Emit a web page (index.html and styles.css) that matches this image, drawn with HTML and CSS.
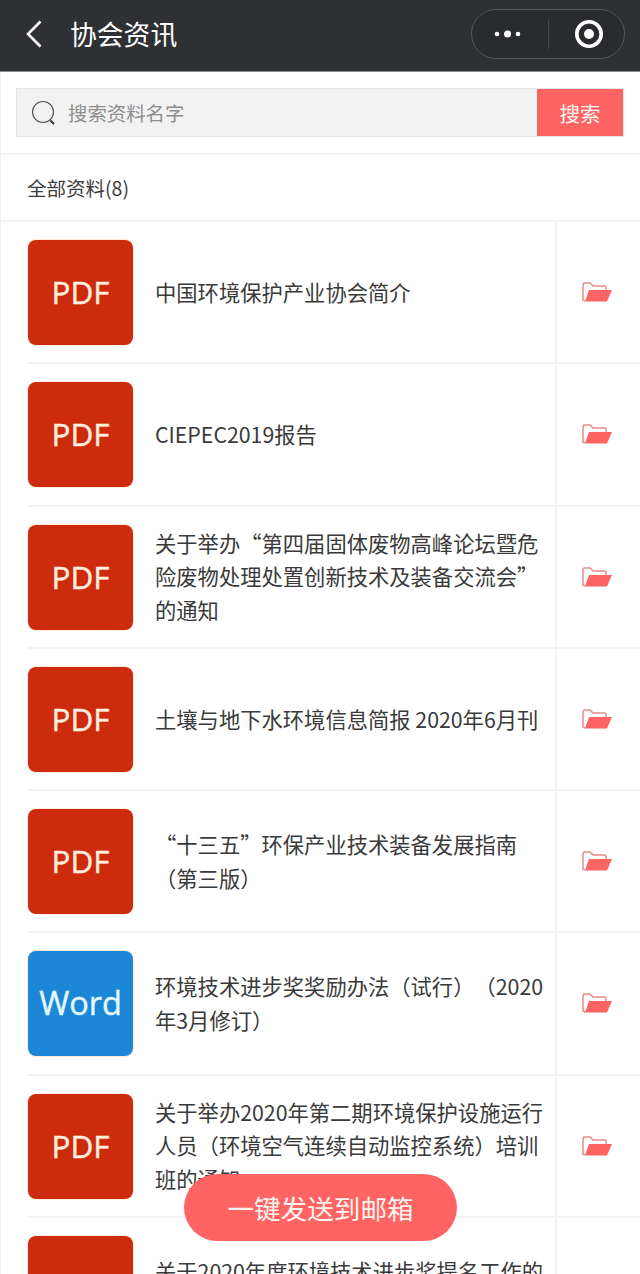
FILE: index.html
```html
<!DOCTYPE html>
<html lang="zh">
<head>
<meta charset="utf-8">
<title>协会资讯</title>
<link rel="stylesheet" href="styles.css">
</head>
<body>
<div class="page">
  <header class="nav">
    <svg class="back" width="18" height="28" viewBox="0 0 18 28"><path d="M15.500 1.500 3 14l12.500 12.500" fill="none" stroke="#fff" stroke-width="2.600"/></svg>
    <div class="nav-title">协会资讯</div>
    <div class="capsule">
      <svg class="more" width="30" height="10" viewBox="0 0 30 10"><circle cx="4" cy="5" r="2.300" fill="#fff"/><circle cx="14.500" cy="5" r="3.500" fill="#fff"/><circle cx="25" cy="5" r="2.300" fill="#fff"/></svg>
      <span class="capsule-line"></span>
      <svg class="target" width="30" height="30" viewBox="0 0 30 30"><circle cx="15" cy="15" r="12.200" fill="none" stroke="#fff" stroke-width="3.600"/><circle cx="15" cy="15" r="5" fill="#fff"/></svg>
    </div>
  </header>

  <section class="search-wrap">
    <div class="search">
      <svg class="search-icon" width="26" height="26" viewBox="0 0 26 26"><circle cx="12" cy="12" r="10.500" fill="none" stroke="#555" stroke-width="1.200"/><path d="M19.500 20.500 23 24" stroke="#333" stroke-width="2"/></svg>
      <span class="placeholder">搜索资料名字</span>
      <span class="search-btn">搜索</span>
    </div>
  </section>

  <div class="count">全部资料(8)</div>

  <ul class="list">
    <li class="row"><div class="main"><div class="badge pdf">PDF</div><p class="name">中国环境保护产业协会简介</p></div><div class="act"><svg class="folder" width="30" height="20" viewBox="0 0 30 20"><path d="M3 19 1 18V3l1-2h6l3 3h12l1 1v3" fill="#fff" stroke="#e88a8a" stroke-width="1.500"/><path d="M7 8h23l-5 11.500H3z" fill="#ff6464"/></svg></div></li>
    <li class="row"><div class="main"><div class="badge pdf">PDF</div><p class="name">CIEPEC2019报告</p></div><div class="act"><svg class="folder" width="30" height="20" viewBox="0 0 30 20"><path d="M3 19 1 18V3l1-2h6l3 3h12l1 1v3" fill="#fff" stroke="#e88a8a" stroke-width="1.500"/><path d="M7 8h23l-5 11.500H3z" fill="#ff6464"/></svg></div></li>
    <li class="row"><div class="main"><div class="badge pdf">PDF</div><p class="name">关于举办“第四届固体废物高峰论坛暨危险废物处理处置创新技术及装备交流会”的通知</p></div><div class="act"><svg class="folder" width="30" height="20" viewBox="0 0 30 20"><path d="M3 19 1 18V3l1-2h6l3 3h12l1 1v3" fill="#fff" stroke="#e88a8a" stroke-width="1.500"/><path d="M7 8h23l-5 11.500H3z" fill="#ff6464"/></svg></div></li>
    <li class="row"><div class="main"><div class="badge pdf">PDF</div><p class="name">土壤与地下水环境信息简报 2020年6月刊</p></div><div class="act"><svg class="folder" width="30" height="20" viewBox="0 0 30 20"><path d="M3 19 1 18V3l1-2h6l3 3h12l1 1v3" fill="#fff" stroke="#e88a8a" stroke-width="1.500"/><path d="M7 8h23l-5 11.500H3z" fill="#ff6464"/></svg></div></li>
    <li class="row"><div class="main"><div class="badge pdf">PDF</div><p class="name">“十三五”环保产业技术装备发展指南（第三版）</p></div><div class="act"><svg class="folder" width="30" height="20" viewBox="0 0 30 20"><path d="M3 19 1 18V3l1-2h6l3 3h12l1 1v3" fill="#fff" stroke="#e88a8a" stroke-width="1.500"/><path d="M7 8h23l-5 11.500H3z" fill="#ff6464"/></svg></div></li>
    <li class="row"><div class="main"><div class="badge word">Word</div><p class="name">环境技术进步奖奖励办法（试行）（2020年3月修订）</p></div><div class="act"><svg class="folder" width="30" height="20" viewBox="0 0 30 20"><path d="M3 19 1 18V3l1-2h6l3 3h12l1 1v3" fill="#fff" stroke="#e88a8a" stroke-width="1.500"/><path d="M7 8h23l-5 11.500H3z" fill="#ff6464"/></svg></div></li>
    <li class="row"><div class="main"><div class="badge pdf">PDF</div><p class="name">关于举办2020年第二期环境保护设施运行人员（环境空气连续自动监控系统）培训班的通知</p></div><div class="act"><svg class="folder" width="30" height="20" viewBox="0 0 30 20"><path d="M3 19 1 18V3l1-2h6l3 3h12l1 1v3" fill="#fff" stroke="#e88a8a" stroke-width="1.500"/><path d="M7 8h23l-5 11.500H3z" fill="#ff6464"/></svg></div></li>
    <li class="row"><div class="main"><div class="badge pdf">PDF</div><p class="name">关于2020年度环境技术进步奖提名工作的通知</p></div><div class="act"><svg class="folder" width="30" height="20" viewBox="0 0 30 20"><path d="M3 19 1 18V3l1-2h6l3 3h12l1 1v3" fill="#fff" stroke="#e88a8a" stroke-width="1.500"/><path d="M7 8h23l-5 11.500H3z" fill="#ff6464"/></svg></div></li>
  </ul>

  <div class="send">一键发送到邮箱</div>
</div>
</body>
</html>
```
FILE: styles.css
```css
* { box-sizing: border-box; }
html, body { margin: 0; padding: 0; background: #fff; }
body { font-family: "Noto Sans CJK SC", "Noto Sans", sans-serif; color: #3a3a3a; text-spacing-trim: space-all; }
.page { position: relative; width: 640px; height: 1274px; overflow: hidden; }

.nav { height: 72px; background: #2f3034; border-bottom: 1px solid #8a8a8c; display: flex; align-items: center; padding: 0 15px 3px 25px; color: #fff; }
.back { flex: none; }
.nav-title { flex: 1; margin-left: 27px; font-size: 26.800px; line-height: 36px; }
.capsule { width: 154px; height: 50px; border: 1px solid #55565a; border-radius: 25px; background: #2a2b2e; display: flex; align-items: center; padding-left: 21px; }
.capsule-line { width: 1px; height: 30px; background: #45464a; margin-left: 25px; }
.target { margin-left: 25px; }

.search-wrap { height: 83px; padding: 16px 16px 0 15px; border-bottom: 2px solid #f3f3f3; border-left: 1px solid #efefef; }
.search { height: 49px; background: #f2f2f2; border: 1px solid #e6e6e6; display: flex; align-items: center; padding-left: 14px; }
.search-icon { flex: none; }
.placeholder { flex: 1; margin-left: 11px; font-size: 19.400px; color: #8e8e8e; }
.search-btn { width: 86px; height: 47px; background: #ff6464; color: #fff5f0; font-size: 20.500px; display: flex; align-items: center; justify-content: center; }

.count { height: 67px; padding-left: 26px; display: flex; align-items: center; font-size: 19.500px; color: #3c3c3c; border-bottom: 2px solid #f3f3f3; border-left: 1px solid #efefef; }

.list { list-style: none; margin: 0; padding: 0; border-left: 1px solid #efefef; }
.row { height: 142.250px; display: flex; padding-left: 26px; }
.main { width: 528px; padding-top: 1px; display: flex; align-items: center; border-bottom: 2px solid #f3f3f3; }
.badge { flex: none; margin-left: 1px; width: 105px; height: 105px; padding-bottom: 2px; border-radius: 8px; display: flex; align-items: center; justify-content: center; font-family: "Open Sans", sans-serif; font-weight: 400; -webkit-text-stroke: 0.4px currentColor; color: #ffeedd; font-size: 31.500px; box-shadow: 0 0 0 1px rgba(255, 200, 170, .35); }
.pdf { background: #cd2b0d; }
.word { background: #1c87d6; color: #e6f8ff; font-size: 32.500px; }
.name { margin: -2px 0 0 22px; width: 392px; font-size: 21.300px; line-height: 33.500px; color: #3a3a3a; }
.act { flex: 1; border-left: 2px solid #f3f3f3; border-bottom: 2px solid #f3f3f3; display: flex; align-items: center; padding-left: 25px; }
.folder { flex: none; }

.send { position: absolute; left: 184px; top: 1174px; width: 273px; height: 67px; border-radius: 34px; background: #ff6464; color: #fff3ee; font-size: 26.600px; display: flex; align-items: center; justify-content: center; }
```
